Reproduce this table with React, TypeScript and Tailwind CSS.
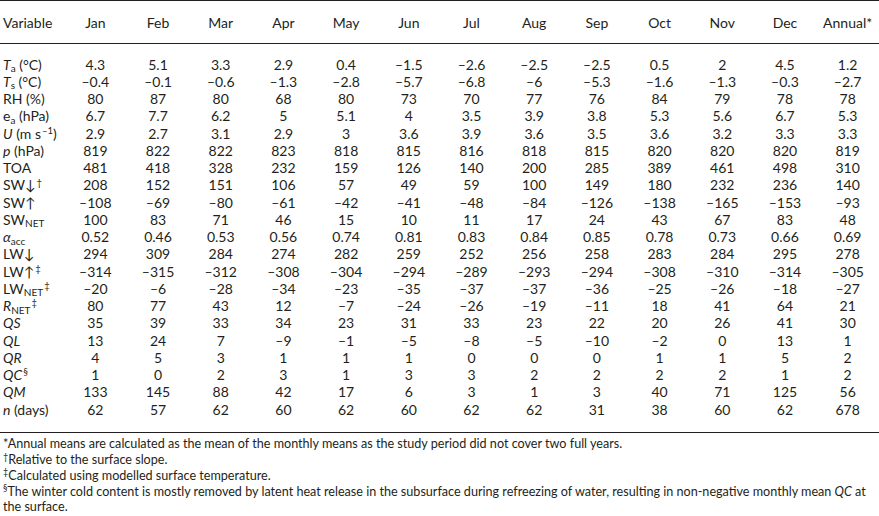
import { ReactNode } from 'react';

const months = ['Jan', 'Feb', 'Mar', 'Apr', 'May', 'Jun', 'Jul', 'Aug', 'Sep', 'Oct', 'Nov', 'Dec'];

type Row = { label: ReactNode; values: string[] };

const Sub = ({ children }: { children: ReactNode }) => <sub className="text-[10px]">{children}</sub>;
const Sup = ({ children }: { children: ReactNode }) => <sup className="text-[9.5px] ml-[1px]">{children}</sup>;
const Mark = ({ children }: { children: ReactNode }) => <sup className="text-[9px]">{children}</sup>;

const rows: Row[] = [
  { label: <><i>T</i><Sub>a</Sub> (°C)</>, values: ['4.3', '5.1', '3.3', '2.9', '0.4', '–1.5', '–2.6', '–2.5', '–2.5', '0.5', '2', '4.5', '1.2'] },
  { label: <><i>T</i><Sub>s</Sub> (°C)</>, values: ['–0.4', '–0.1', '–0.6', '–1.3', '–2.8', '–5.7', '–6.8', '–6', '–5.3', '–1.6', '–1.3', '–0.3', '–2.7'] },
  { label: <>RH (%)</>, values: ['80', '87', '80', '68', '80', '73', '70', '77', '76', '84', '79', '78', '78'] },
  { label: <>e<Sub>a</Sub> (hPa)</>, values: ['6.7', '7.7', '6.2', '5', '5.1', '4', '3.5', '3.9', '3.8', '5.3', '5.6', '6.7', '5.3'] },
  { label: <><i>U</i> (m s<Sup>–1</Sup>)</>, values: ['2.9', '2.7', '3.1', '2.9', '3', '3.6', '3.9', '3.6', '3.5', '3.6', '3.2', '3.3', '3.3'] },
  { label: <><i>p</i> (hPa)</>, values: ['819', '822', '822', '823', '818', '815', '816', '818', '815', '820', '820', '820', '819'] },
  { label: <>TOA</>, values: ['481', '418', '328', '232', '159', '126', '140', '200', '285', '389', '461', '498', '310'] },
  { label: <>SW↓<Sup>†</Sup></>, values: ['208', '152', '151', '106', '57', '49', '59', '100', '149', '180', '232', '236', '140'] },
  { label: <>SW↑</>, values: ['–108', '–69', '–80', '–61', '–42', '–41', '–48', '–84', '–126', '–138', '–165', '–153', '–93'] },
  { label: <>SW<Sub>NET</Sub></>, values: ['100', '83', '71', '46', '15', '10', '11', '17', '24', '43', '67', '83', '48'] },
  { label: <><i>α</i><Sub>acc</Sub></>, values: ['0.52', '0.46', '0.53', '0.56', '0.74', '0.81', '0.83', '0.84', '0.85', '0.78', '0.73', '0.66', '0.69'] },
  { label: <>LW↓</>, values: ['294', '309', '284', '274', '282', '259', '252', '256', '258', '283', '284', '295', '278'] },
  { label: <>LW↑<Sup>‡</Sup></>, values: ['–314', '–315', '–312', '–308', '–304', '–294', '–289', '–293', '–294', '–308', '–310', '–314', '–305'] },
  { label: <>LW<Sub>NET</Sub><Sup>‡</Sup></>, values: ['–20', '–6', '–28', '–34', '–23', '–35', '–37', '–37', '–36', '–25', '–26', '–18', '–27'] },
  { label: <><i>R</i><Sub>NET</Sub><Sup>‡</Sup></>, values: ['80', '77', '43', '12', '–7', '–24', '–26', '–19', '–11', '18', '41', '64', '21'] },
  { label: <i>QS</i>, values: ['35', '39', '33', '34', '23', '31', '33', '23', '22', '20', '26', '41', '30'] },
  { label: <i>QL</i>, values: ['13', '24', '7', '–9', '–1', '–5', '–8', '–5', '–10', '–2', '0', '13', '1'] },
  { label: <i>QR</i>, values: ['4', '5', '3', '1', '1', '1', '0', '0', '0', '1', '1', '5', '2'] },
  { label: <><i>QC</i><Sup>§</Sup></>, values: ['1', '0', '2', '3', '1', '3', '3', '2', '2', '2', '2', '1', '2'] },
  { label: <i>QM</i>, values: ['133', '145', '88', '42', '17', '6', '3', '1', '3', '40', '71', '125', '56'] },
  { label: <><i>n</i> (days)</>, values: ['62', '57', '62', '60', '62', '60', '62', '62', '31', '38', '60', '62', '678'] },
];

const grid = 'grid grid-cols-[64px_repeat(13,1fr)] items-center';

export default function App() {
  return (
    <div className="w-[879px] h-[516px] bg-white text-[#231f20] font-['Lato','Noto_Sans',sans-serif] overflow-hidden">
      <div className={`${grid} h-[44px] border-t border-b border-[#231f20] text-[14px]`}>
        <div className="pl-[3px]">Variable</div>
        {months.map((m) => (
          <div key={m} className="text-center">{m}</div>
        ))}
        <div className="text-center">Annual*</div>
      </div>

      <div className="pt-[12px] pb-[14px] border-b border-[#231f20] text-[14px] leading-none">
        {rows.map((r, i) => (
          <div key={i} className={`${grid} h-[17.25px]`}>
            <div className="pl-[3px] whitespace-nowrap">{r.label}</div>
            {r.values.map((v, j) => (
              <div key={j} className="text-center">{v}</div>
            ))}
          </div>
        ))}
      </div>

      <div className="pt-[3px] pl-[3px] pr-[4px] text-[12.6px] leading-[15.8px]">
        <p>*Annual means are calculated as the mean of the monthly means as the study period did not cover two full years.</p>
        <p><Mark>†</Mark>Relative to the surface slope.</p>
        <p><Mark>‡</Mark>Calculated using modelled surface temperature.</p>
        <p>
          <Mark>§</Mark>The winter cold content is mostly removed by latent heat release in the subsurface during refreezing of water, resulting in non-negative monthly mean <i>QC</i> at the surface.
        </p>
      </div>
    </div>
  );
}
